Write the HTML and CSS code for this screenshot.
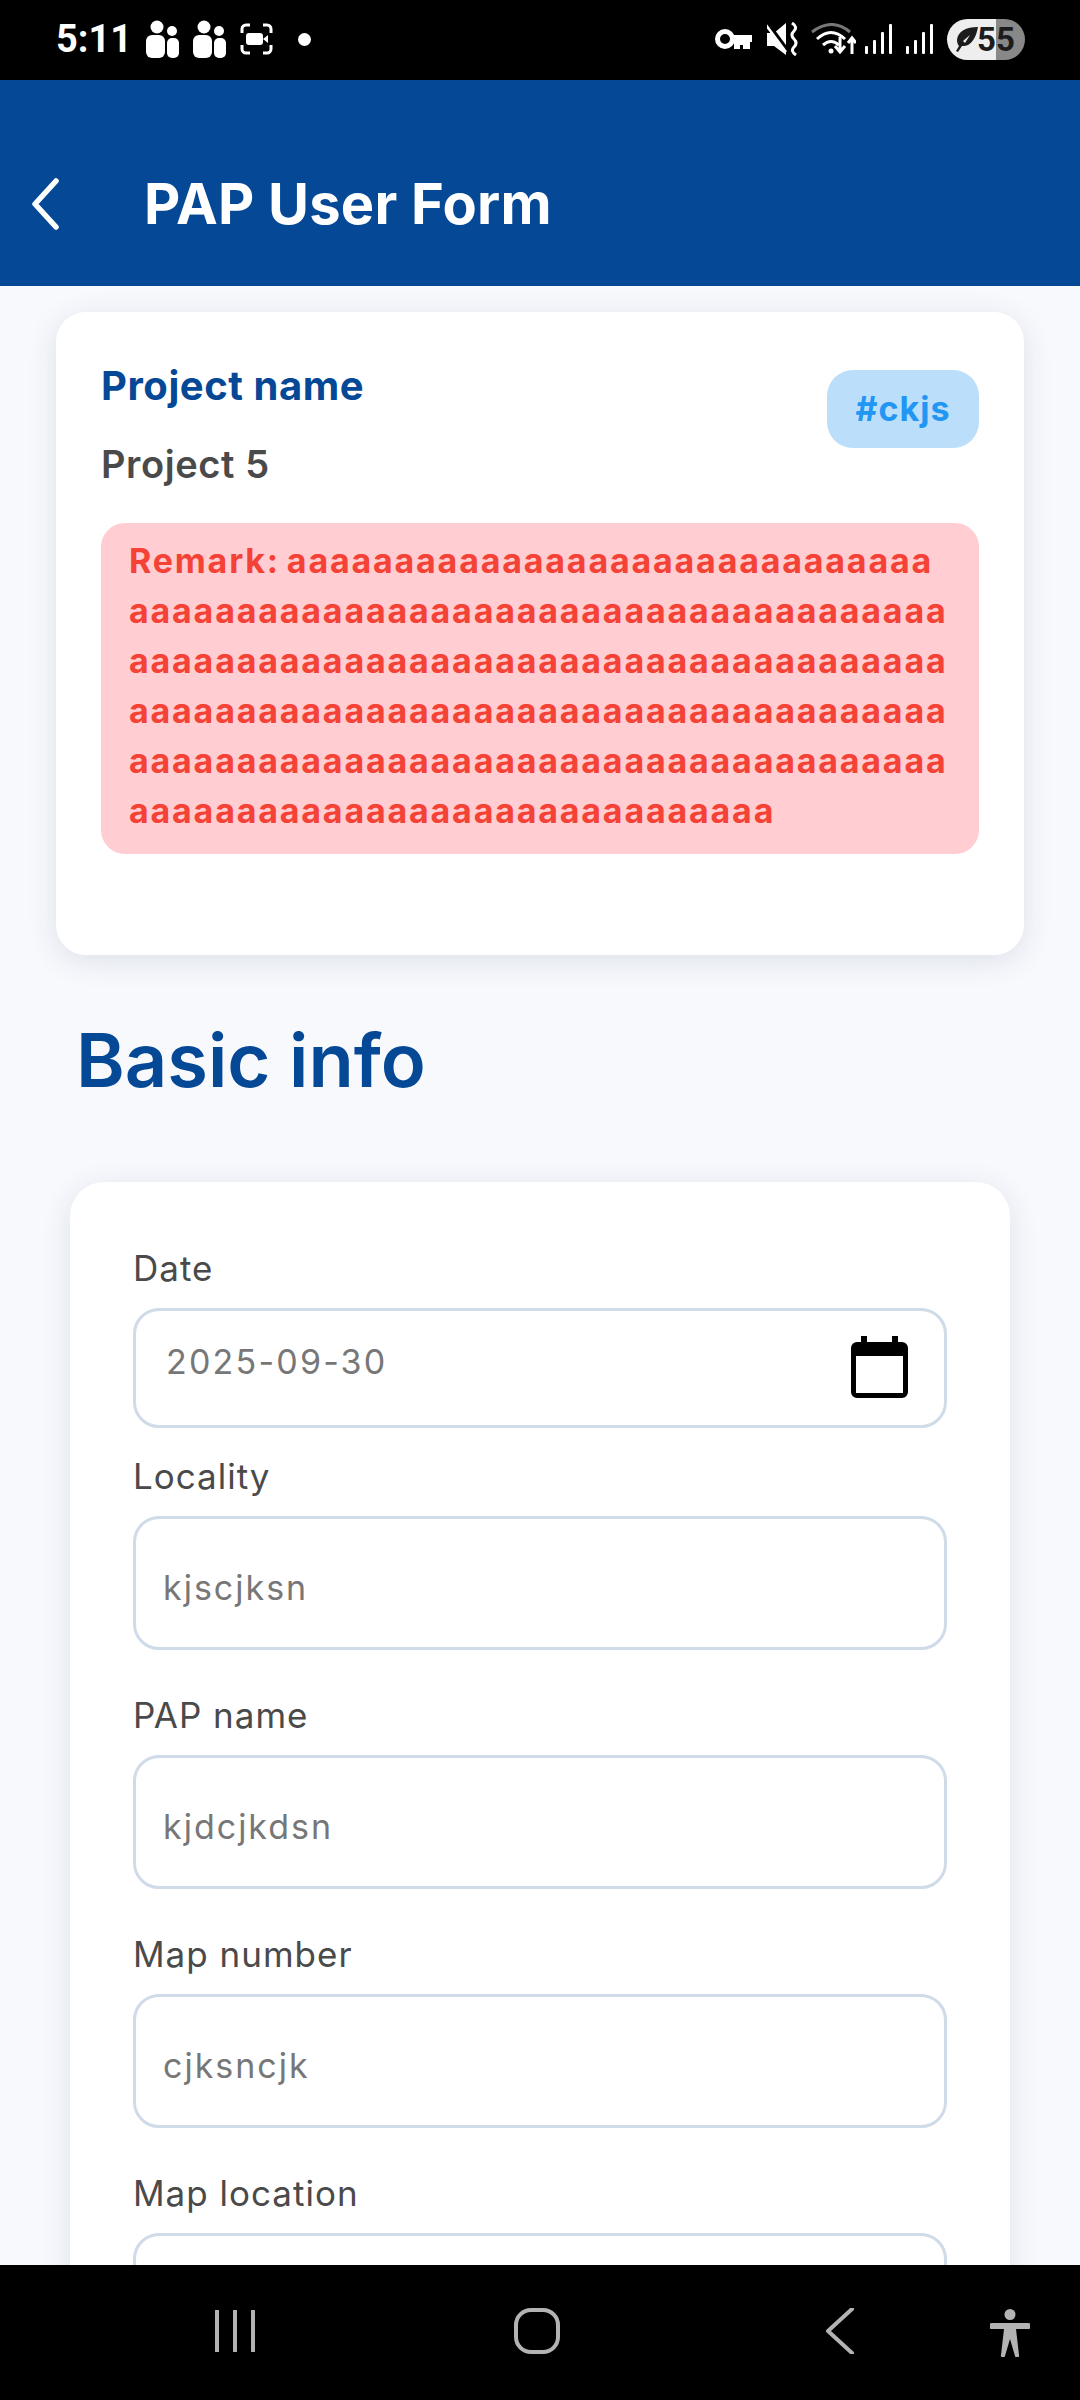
FILE: index.html
```html
<!DOCTYPE html>
<html lang="en">
<head>
<meta charset="utf-8">
<title>PAP User Form</title>
<link rel="stylesheet" href="styles.css">
</head>
<body>
<div class="screen">
  <div class="status">
    <div class="status-left">
      <span class="time">5:11</span>
      <svg class="ic-people" viewBox="0 0 33 38"><circle cx="11" cy="7" r="6.500"/><circle cx="26" cy="11" r="5"/><rect x="0" y="15" width="19" height="23" rx="6"/><rect x="21" y="18" width="12" height="20" rx="5"/></svg>
      <svg class="ic-people" viewBox="0 0 33 38"><circle cx="11" cy="7" r="6.500"/><circle cx="26" cy="11" r="5"/><rect x="0" y="15" width="19" height="23" rx="6"/><rect x="21" y="18" width="12" height="20" rx="5"/></svg>
      <svg class="ic-rec" viewBox="0 0 33 32"><path d="M2 10V6a4 4 0 0 1 4-4h4M23 2h4a4 4 0 0 1 4 4v4M31 22v4a4 4 0 0 1-4 4h-4M10 30H6a4 4 0 0 1-4-4v-4" class="rec-line"/><rect x="6" y="10" width="17" height="12" rx="3"/><path d="M23 16l5-4v8z"/></svg>
      <span class="dot"></span>
    </div>
    <div class="status-right">
      <svg class="ic-key" viewBox="0 0 37 21"><circle cx="10" cy="10" r="7.500" class="key-ring"/><path d="M17 6h20v7h-2v7h-7v-4h-3v4h-6v-7h-2z"/></svg>
      <svg class="ic-mute" viewBox="0 0 32 34"><path d="M0 11h7L19 1v32L7 24H0z"/><path d="M1 2l22 30" class="mute-cut"/><path d="M-1 3l20 27" class="mute-slash"/><path d="M25 1q6 4 2 8t0 8t0 8t2 8" class="mute-wave"/></svg>
      <svg class="ic-wifi" viewBox="0 0 45 32"><path d="M1 9Q21-6 39 9" class="wifi-dim"/><path d="M6 16Q20 3 34 16M12 22q8-7 16 0" class="wifi-line"/><circle cx="20" cy="28" r="2.500"/><path d="M29 14v14M24 23l5 6 5-6" class="wifi-arrow"/><path d="M41 31V16M37 20l4-5 4 5" class="wifi-arrow"/></svg>
      <svg class="ic-signal" viewBox="0 0 27 30"><rect x="0" y="22" width="3" height="8" rx="1"/><rect x="8" y="16" width="3" height="14" rx="1"/><rect x="16" y="8" width="3" height="22" rx="1"/><rect x="24" y="0" width="3" height="30" rx="1"/></svg>
      <svg class="ic-signal" viewBox="0 0 27 30"><rect x="0" y="22" width="3" height="8" rx="1"/><rect x="8" y="16" width="3" height="14" rx="1"/><rect x="16" y="8" width="3" height="22" rx="1"/><rect x="24" y="0" width="3" height="30" rx="1"/></svg>
      <div class="battery">
        <svg class="ic-leaf" viewBox="0 0 24 26"><path d="M24 1C12 1 4 5 3 14c0 3 1 5 2 6l-3 5 2 1 4-6c8 1 14-7 16-19zM9 15l7-6-5 8z"/></svg>
        <span class="battery-num">55</span>
      </div>
    </div>
  </div>

  <header class="appbar">
    <svg class="ic-back" viewBox="0 0 27 52"><path d="M24 3L3 26l21 23"/></svg>
    <h1 class="appbar-title">PAP User Form</h1>
  </header>

  <main class="content">
    <section class="project-card">
      <div class="project-top">
        <div class="project-names">
          <div class="project-label">Project name</div>
          <div class="project-value">Project 5</div>
        </div>
        <span class="tag">#ckjs</span>
      </div>
      <div class="remark">Remark: aaaaaaaaaaaaaaaaaaaaaaaaaaaaaaaaaaaaaaaaaaaaaaaaaaaaaaaaaaaaaaaaaaaaaaaaaaaaaaaaaaaaaaaaaaaaaaaaaaaaaaaaaaaaaaaaaaaaaaaaaaaaaaaaaaaaaaaaaaaaaaaaaaaaaaaaaaaaaaaaaaaaaaaaaaaaaaaaaaaaaaaaaaaaaaaaaaaaaaaaaaaaaaaaaaaa</div>
    </section>

    <h2 class="section-title">Basic info</h2>

    <section class="form-card">
      <div class="field field-date">
        <label class="field-label">Date</label>
        <div class="input input-date">
          <span class="date-value">2025-09-30</span>
          <svg class="ic-cal" viewBox="0 0 57 62"><path d="M10 0h6v6h25V0h6v6h4a6 6 0 0 1 6 6v44a6 6 0 0 1-6 6H6a6 6 0 0 1-6-6V12a6 6 0 0 1 6-6h4zM5 20v37h47V20z"/></svg>
        </div>
      </div>
      <div class="field">
        <label class="field-label">Locality</label>
        <div class="input"><span class="input-value">kjscjksn</span></div>
      </div>
      <div class="field">
        <label class="field-label">PAP name</label>
        <div class="input"><span class="input-value">kjdcjkdsn</span></div>
      </div>
      <div class="field">
        <label class="field-label">Map number</label>
        <div class="input"><span class="input-value">cjksncjk</span></div>
      </div>
      <div class="field">
        <label class="field-label">Map location</label>
        <div class="input"></div>
      </div>
    </section>
  </main>

  <nav class="navbar">
    <svg class="nav-recents" viewBox="0 0 40 42"><path d="M2 1v40M20 1v40M38 1v40"/></svg>
    <svg class="nav-home" viewBox="0 0 46 46"><rect x="2" y="2" width="42" height="42" rx="15"/></svg>
    <svg class="nav-back" viewBox="0 0 30 46"><path d="M27 1L3 23l24 22"/></svg>
    <svg class="nav-access" viewBox="0 0 40 48"><circle cx="20" cy="5.500" r="5.500"/><path d="M2 14h36a2.500 2.500 0 0 1 0 6H26l3 26a2 2 0 0 1-4 1l-5-17-5 17a2 2 0 0 1-4-1l3-26H2a2.500 2.500 0 0 1 0-6z"/></svg>
  </nav>
</div>
</body>
</html>
```

FILE: styles.css
```css
* { box-sizing: border-box; }
html, body { margin: 0; padding: 0; }
body { background: #f7f9fd; font-family: Inter, "Noto Sans", sans-serif; }
.screen { width: 1080px; height: 2400px; display: flex; flex-direction: column; overflow: hidden; }

.status { height: 80px; flex: none; background: #000; color: #fff; display: flex; justify-content: space-between; align-items: center; padding: 0 55px 2px 56px; }
.status-left, .status-right { display: flex; align-items: center; }
.time { font: 700 38px/40px Roboto, Inter, sans-serif; width: 90px; }
.ic-people { width: 33px; height: 38px; fill: #fff; margin-right: 14px; }
.ic-rec { width: 33px; height: 32px; fill: #fff; margin-right: 25px; }
.rec-line { fill: none; stroke: #fff; stroke-width: 3; }
.dot { width: 13px; height: 13px; border-radius: 50%; background: #fff; }
.ic-key { width: 37px; height: 21px; fill: #fff; margin-right: 15px; }
.key-ring { fill: none; stroke: #fff; stroke-width: 5; }
.ic-mute { width: 32px; height: 34px; fill: #fff; margin-right: 12px; }
.mute-cut { stroke: #000; stroke-width: 4; fill: none; }
.mute-slash { stroke: #fff; stroke-width: 2.5; fill: none; }
.mute-wave { fill: none; stroke: #fff; stroke-width: 3; }
.ic-wifi { width: 45px; height: 32px; fill: #fff; margin-right: 9px; }
.wifi-dim { fill: none; stroke: #777; stroke-width: 3; }
.wifi-line, .wifi-arrow { fill: none; stroke: #fff; stroke-width: 3; }
.ic-signal { width: 27px; height: 30px; fill: #fff; margin-right: 14px; }
.battery { width: 78px; height: 41px; border-radius: 21px; background: linear-gradient(90deg, #eeeeee 0 63%, #888888 63% 100%); display: flex; align-items: center; padding-left: 7px; color: #1c1c1c; }
.ic-leaf { width: 24px; height: 26px; fill: #1c1c1c; flex: none; }
.battery-num { font: 700 33px/41px Roboto, Inter, sans-serif; margin-left: -1px; }

.appbar { height: 206px; flex: none; background: #054896; color: #fff; display: flex; align-items: center; padding: 41px 0 0 32px; }
.ic-back { width: 27px; height: 52px; fill: none; stroke: #fff; stroke-width: 5.5; stroke-linecap: round; stroke-linejoin: round; flex: none; }
.appbar-title { margin: 0 0 0 85px; font-size: 56px; line-height: 68px; font-weight: 700; letter-spacing: 0.25px; }

.content { flex: 1; overflow: hidden; }
.project-card { margin: 26px 56px 0; height: 643px; padding: 50px 45px 0 45px; background: #fff; border-radius: 30px; box-shadow: 0 6px 30px rgba(40, 50, 90, 0.12); }
.project-top { display: flex; justify-content: space-between; align-items: flex-start; }
.project-label { font-size: 40px; line-height: 48px; font-weight: 700; color: #054896; letter-spacing: 0.55px; }
.project-value { font-size: 38px; line-height: 48px; font-weight: 600; color: #4a4a4a; margin-top: 30px; letter-spacing: 0.6px; }
.tag { width: 152px; height: 78px; margin-top: 8px; border-radius: 26px; background: #bbdefb; color: #2196f3; font-size: 34px; font-weight: 700; line-height: 78px; text-align: center; letter-spacing: 1px; }
.remark { margin-top: 35px; height: 331px; padding: 13px 30px 13px 28px; background: #ffcdd2; border-radius: 24px; color: #f44336; font-size: 34px; line-height: 50px; font-weight: 700; letter-spacing: 1.8px; word-spacing: -3px; word-break: break-all; }

.section-title { margin: 57px 0 0 76px; font-size: 74px; line-height: 96px; font-weight: 600; color: #054896; }

.form-card { margin: 74px 70px 0; padding: 60px 63px 0; height: 1200px; background: #fff; border-radius: 34px; box-shadow: 0 6px 30px rgba(40, 50, 90, 0.12); }
.field { margin-bottom: 39px; }
.field-date { margin-bottom: 22px; }
.field-label { display: block; font-size: 35px; line-height: 52px; letter-spacing: 1px; font-weight: 400; color: #4a4a4a; margin-bottom: 14px; }
.input { height: 134px; border: 3px solid #cfdbe8; border-radius: 26px; background: #fff; display: flex; align-items: center; padding: 8px 27px 0; font-size: 34px; color: #777; letter-spacing: 2px; }
.input-date { height: 120px; padding: 0 36px 0 30px; justify-content: space-between; }
.date-value { letter-spacing: 2.2px; margin-bottom: 14px; }
.ic-cal { width: 57px; height: 62px; fill: #000; margin-bottom: 2px; }

.navbar { position: relative; height: 135px; flex: none; background: #000; }
.navbar svg { position: absolute; }
.nav-recents { left: 215px; top: 45px; width: 40px; height: 42px; fill: none; stroke: #b3b3b3; stroke-width: 4; stroke-linecap: round; }
.nav-home { left: 514px; top: 43px; width: 46px; height: 46px; fill: none; stroke: #b3b3b3; stroke-width: 4; }
.nav-back { left: 825px; top: 43px; width: 30px; height: 46px; fill: none; stroke: #b3b3b3; stroke-width: 4; stroke-linecap: round; stroke-linejoin: round; }
.nav-access { left: 990px; top: 44px; width: 40px; height: 48px; fill: #b3b3b3; }
```
